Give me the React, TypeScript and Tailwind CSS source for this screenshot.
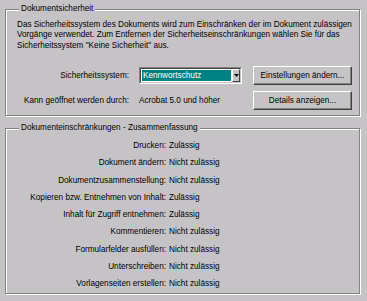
import React from "react";

const font = { fontFamily: '"Liberation Sans", Arial, sans-serif' };

function Button({ children }: { children: React.ReactNode }) {
  return (
    <div className="flex h-[19px] w-[99px] items-center justify-center border border-t-white border-l-white border-r-[#424142] border-b-[#424142] shadow-[inset_-1px_-1px_0_#848284] bg-[#c6c3c6]">
      {children}
    </div>
  );
}

function Select() {
  return (
    <div className="flex h-[17px] w-[103px] border border-t-[#848284] border-l-[#848284] border-r-white border-b-white">
      <div className="flex flex-1 items-stretch border border-t-[#424142] border-l-[#424142] border-r-[#c6c3c6] border-b-[#c6c3c6] bg-white">
        <div className="m-[1px] flex flex-1 items-center bg-[#008284] pl-[1px] text-white">Kennwortschutz</div>
        <div className="flex w-[8px] items-center justify-center border border-t-white border-l-white border-r-[#424142] border-b-[#424142] bg-[#c6c3c6]">
          <svg width="5" height="3" viewBox="0 0 5 3">
            <polygon points="0,0 5,0 2.5,3" fill="#000" />
          </svg>
        </div>
      </div>
    </div>
  );
}

const rows: [string, string][] = [
  ["Drucken:", "Zulässig"],
  ["Dokument ändern:", "Nicht zulässig"],
  ["Dokumentzusammenstellung:", "Nicht zulässig"],
  ["Kopieren bzw. Entnehmen von Inhalt:", "Zulässig"],
  ["Inhalt für Zugriff entnehmen:", "Zulässig"],
  ["Kommentieren:", "Nicht zulässig"],
  ["Formularfelder ausfüllen:", "Nicht zulässig"],
  ["Unterschreiben:", "Nicht zulässig"],
  ["Vorlagenseiten erstellen:", "Nicht zulässig"],
];

export default function App() {
  return (
    <div
      className="h-[301px] w-[367px] overflow-hidden bg-[#c6c3c6] pl-[5px] pt-[9px] text-[8.2px] leading-[10px] text-black"
      style={font}
    >
      <div className="relative h-[107px] w-[355px] border border-[#848284] shadow-[inset_1px_1px_0_#fff,1px_1px_0_#fff]">
        <div className="absolute left-[13px] top-[-6px] bg-[#c6c3c6] px-[2px] leading-[10px]">Dokumentsicherheit</div>
        <div className="pl-[11px] pt-[9.5px] leading-[10.5px]">
          Das Sicherheitssystem des Dokuments wird zum Einschränken der im Dokument zulässigen
          <br />
          Vorgänge verwendet. Zum Entfernen der Sicherheitseinschränkungen wählen Sie für das
          <br />
          Sicherheitssystem "Keine Sicherheit" aus.
        </div>
        <div className="mt-[15px] flex h-[19px] items-center">
          <div className="w-[123px] text-right">Sicherheitssystem:</div>
          <div className="ml-[10px]">
            <Select />
          </div>
          <div className="ml-[11px]">
            <Button>Einstellungen ändern...</Button>
          </div>
        </div>
        <div className="mt-[6px] flex h-[19px] items-center">
          <div className="w-[123px] text-right">Kann geöffnet werden durch:</div>
          <div className="ml-[10px] w-[114px]">Acrobat 5.0 und höher</div>
          <Button>Details anzeigen...</Button>
        </div>
      </div>

      <div className="relative mt-[12px] h-[166px] w-[355px] border border-[#848284] shadow-[inset_1px_1px_0_#fff,1px_1px_0_#fff]">
        <div className="absolute left-[13px] top-[-6px] bg-[#c6c3c6] px-[2px] leading-[10px]">
          Dokumenteinschränkungen - Zusammenfassung
        </div>
        <div className="grid grid-cols-[160px_1fr] pt-[8.4px]">
          {rows.map(([k, v]) => (
            <React.Fragment key={k}>
              <div className="flex h-[17.25px] items-center justify-end">{k}</div>
              <div className="flex h-[17.25px] items-center pl-[3px]">{v}</div>
            </React.Fragment>
          ))}
        </div>
      </div>
    </div>
  );
}
